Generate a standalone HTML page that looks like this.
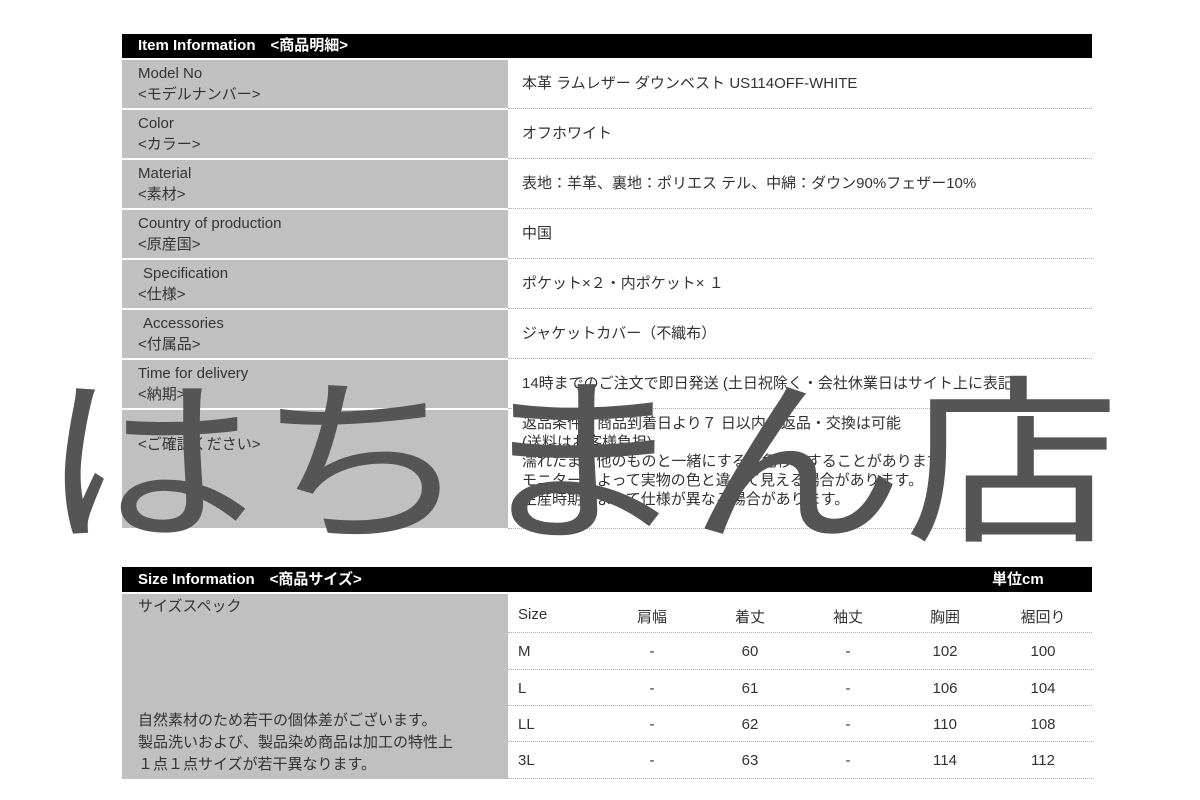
<!DOCTYPE html>
<html><head><meta charset="utf-8"><style>
body{margin:0;width:1200px;height:800px;background:#fff;position:relative;overflow:hidden;font-family:"Liberation Sans","Noto Sans CJK JP",sans-serif;color:#333;font-size:15px}
.a{position:absolute}
.hd{background:#000;color:#fff;font-weight:bold;font-size:15px;line-height:24px;padding-left:16px;box-sizing:border-box}
.g{background:#c0c0c0;left:122px;width:386px;box-sizing:border-box;padding-left:16px;line-height:21px}
.v{left:522px;width:570px;line-height:21px}
.dl{left:508px;width:584px;border-top:1px dotted #aaa;height:0}
.c{text-align:center;width:80px}
</style></head><body>
<div class="a hd" style="left:122px;top:34px;width:970px;height:24px">Item Information　<商品明細></div>

<div class="a g" style="top:60px;height:48px;padding-top:3px">Model No<br><モデルナンバー></div>
<div class="a g" style="top:110px;height:48px;padding-top:3px">Color<br><カラー></div>
<div class="a g" style="top:160px;height:48px;padding-top:3px">Material<br><素材></div>
<div class="a g" style="top:210px;height:48px;padding-top:3px">Country of production<br><原産国></div>
<div class="a g" style="top:260px;height:48px;padding-top:3px;padding-left:21px">Specification<br><span style="margin-left:-5px"><仕様></span></div>
<div class="a g" style="top:310px;height:48px;padding-top:3px;padding-left:21px">Accessories<br><span style="margin-left:-5px"><付属品></span></div>
<div class="a g" style="top:360px;height:48px;padding-top:3px">Time for delivery<br><納期></div>
<div class="a g" style="top:410px;height:118px;padding-top:24px"><ご確認ください></div>

<div class="a v" style="top:73px">本革 ラムレザー ダウンベスト US114OFF-WHITE</div>
<div class="a dl" style="top:108px"></div>
<div class="a v" style="top:123px">オフホワイト</div>
<div class="a dl" style="top:158px"></div>
<div class="a v" style="top:173px">表地：羊革、裏地：ポリエス テル、中綿：ダウン90%フェザー10%</div>
<div class="a dl" style="top:208px"></div>
<div class="a v" style="top:223px">中国</div>
<div class="a dl" style="top:258px"></div>
<div class="a v" style="top:273px">ポケット×２・内ポケット× １</div>
<div class="a dl" style="top:308px"></div>
<div class="a v" style="top:323px">ジャケットカバー（不織布）</div>
<div class="a dl" style="top:358px"></div>
<div class="a v" style="top:373px">14時までのご注文で即日発送 (土日祝除く・会社休業日はサイト上に表記)</div>
<div class="a dl" style="top:408px"></div>
<div class="a v" style="top:414px;line-height:19px">返品条件：商品到着日より７ 日以内の返品・交換は可能<br>(送料はお客様負担)<br>濡れたまま他のものと一緒にすると色移りすることがあります。<br>モニターによって実物の色と違って見える場合があります。<br>生産時期によって仕様が異なる場合があります。</div>
<div class="a dl" style="top:528px"></div>

<div class="a hd" style="left:122px;top:567px;width:970px;height:25px;line-height:25px">Size Information　<商品サイズ><span style="position:absolute;left:870px">単位cm</span></div>
<div class="a g" style="top:594px;height:185px;padding-top:2px">サイズスペック<div style="position:absolute;top:116px;left:16px;line-height:22px">自然素材のため若干の個体差がございます。<br>製品洗いおよび、製品染め商品は加工の特性上<br>１点１点サイズが若干異なります。</div></div>

<div class="a" style="left:508px;top:594px;width:584px">
<div style="position:relative;height:185px">
<div class="a" style="left:10px;top:12px">Size</div>
<div class="a c" style="left:104px;top:12px">肩幅</div><div class="a c" style="left:202px;top:12px">着丈</div><div class="a c" style="left:300px;top:12px">袖丈</div><div class="a c" style="left:397px;top:12px">胸囲</div><div class="a c" style="left:495px;top:12px">裾回り</div>
<div class="a dl" style="left:0;top:38px"></div>
<div class="a" style="left:10px;top:49px">M</div><div class="a c" style="left:104px;top:49px">-</div><div class="a c" style="left:202px;top:49px">60</div><div class="a c" style="left:300px;top:49px">-</div><div class="a c" style="left:397px;top:49px">102</div><div class="a c" style="left:495px;top:49px">100</div>
<div class="a dl" style="left:0;top:75px"></div>
<div class="a" style="left:10px;top:86px">L</div><div class="a c" style="left:104px;top:86px">-</div><div class="a c" style="left:202px;top:86px">61</div><div class="a c" style="left:300px;top:86px">-</div><div class="a c" style="left:397px;top:86px">106</div><div class="a c" style="left:495px;top:86px">104</div>
<div class="a dl" style="left:0;top:111px"></div>
<div class="a" style="left:10px;top:122px">LL</div><div class="a c" style="left:104px;top:122px">-</div><div class="a c" style="left:202px;top:122px">62</div><div class="a c" style="left:300px;top:122px">-</div><div class="a c" style="left:397px;top:122px">110</div><div class="a c" style="left:495px;top:122px">108</div>
<div class="a dl" style="left:0;top:147px"></div>
<div class="a" style="left:10px;top:158px">3L</div><div class="a c" style="left:104px;top:158px">-</div><div class="a c" style="left:202px;top:158px">63</div><div class="a c" style="left:300px;top:158px">-</div><div class="a c" style="left:397px;top:158px">114</div><div class="a c" style="left:495px;top:158px">112</div>
<div class="a dl" style="left:0;top:184px"></div>
</div></div>

<div class="a" style="left:40px;top:299px;font-family:'Noto Sans CJK JP',sans-serif;font-size:180px;line-height:300px;color:#555;white-space:nowrap;transform:scaleX(1.2);transform-origin:0 0">はちまん店</div>
</body></html>
